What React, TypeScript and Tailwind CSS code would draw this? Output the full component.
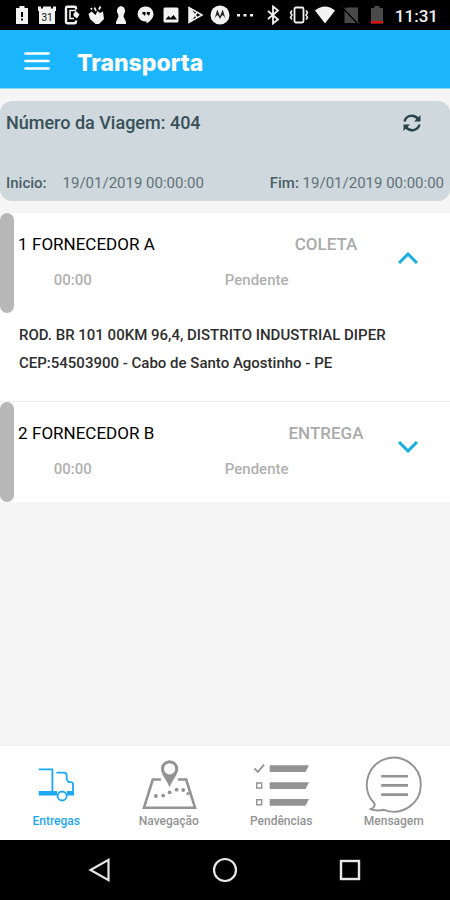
import { useState, type ReactNode } from 'react';

type Stop = {
  id: number;
  name: string;
  type: string;
  time: string;
  status: string;
  address: string[];
};

const stops: Stop[] = [
  {
    id: 1,
    name: 'FORNECEDOR A',
    type: 'COLETA',
    time: '00:00',
    status: 'Pendente',
    address: ['ROD. BR 101 00KM 96,4, DISTRITO INDUSTRIAL DIPER', 'CEP:54503900 - Cabo de Santo Agostinho - PE'],
  },
  {
    id: 2,
    name: 'FORNECEDOR B',
    type: 'ENTREGA',
    time: '00:00',
    status: 'Pendente',
    address: [],
  },
];

function StatusIcon({ children }: { children: ReactNode }) {
  return (
    <svg viewBox="0 0 20 20" className="h-5 w-5 shrink-0" fill="#f2f2f2" aria-hidden="true">
      {children}
    </svg>
  );
}

function StatusBar() {
  return (
    <div className="flex h-[30px] items-center bg-black pr-3 pl-3">
      <div className="flex w-[57%] justify-between">
        {/* low battery */}
        <StatusIcon>
          <path d="M7.500 1h5v2H16v16H4V3h3.500z" />
          <path d="M9 7h2v5H9zM9 13.500h2v2H9z" fill="#000" />
        </StatusIcon>
        {/* calendar */}
        <StatusIcon>
          <path d="M1 1.500h3v2h2v-2h8v2h2v-2h3V6h-1v13H2V6H1z" />
          <text x="10" y="15.500" fontSize="10" textAnchor="middle" fill="#111" className="font-['Roboto']">
            31
          </text>
        </StatusIcon>
        {/* phone with arrow */}
        <StatusIcon>
          <path
            d="M14 4.500V3q0-1.200-1.200-1.200H5.200Q4 1.800 4 3v14q0 1.200 1.200 1.200h7.600Q14 18.200 14 17v-1.500"
            fill="none"
            stroke="#f2f2f2"
            strokeWidth="2.400"
          />
          <path d="M14 5.500H8v8h4" fill="none" stroke="#f2f2f2" strokeWidth="1.600" />
          <path d="M11.500 8.500L14 6l3.500 3.500-2.500 4-3.500-2.500z" />
        </StatusIcon>
        {/* clapping hand */}
        <StatusIcon>
          <path d="M2.500 9l3-2.500 4 3.500 2-4 2.500 2 3-1.500 1 7.500-5 5H9.500L4 14z" />
          <path d="M6 4.500L5 3M10 6L8.500 2.500M13 4.500l1.500-3" stroke="#f2f2f2" strokeWidth="1.800" />
        </StatusIcon>
        {/* keyhole */}
        <StatusIcon>
          <path d="M10 1a5 5 0 0 1 3 8l-.5 2.500L15 17v2H5v-2l2.500-5.500L7 9a5 5 0 0 1 3-8z" />
        </StatusIcon>
        {/* hangouts */}
        <StatusIcon>
          <path d="M10 1.500a7.500 7.500 0 0 1 7.500 7.500c0 4-3.500 7.500-7 9.500v-2.200A7.500 7.500 0 1 1 10 1.500z" />
          <path d="M6.500 7h3v2.500L8 11V9.500H6.500zM10.800 7h3v2.500L12.300 11V9.500h-1.500z" fill="#000" />
        </StatusIcon>
        {/* picture */}
        <StatusIcon>
          <rect x="2.500" y="2.500" width="15" height="15" rx="1.500" />
          <path d="M4.500 14.500l3-3.500 2 2 3-3 3.500 4.500z" fill="#000" />
        </StatusIcon>
        {/* play store */}
        <StatusIcon>
          <path d="M4 2.500v15L17 10zM4 2.500L12.500 13M4 17.500L12.500 7" fill="none" stroke="#f2f2f2" strokeWidth="1.500" />
          <path d="M4 3v14l6-7z" />
        </StatusIcon>
        {/* motorola */}
        <StatusIcon>
          <circle cx="10" cy="10" r="9.500" />
          <path
            d="M7.300 4.500l2.200 5.500.5 1.500.5-1.500 2.200-5.500 2.800 9.500q-1.200-3-2.800-4-1.700 1.500-2.700 4-1-2.500-2.700-4-1.600 1-2.800 4z"
            fill="#222"
          />
        </StatusIcon>
        <StatusIcon>
          <path d="M2 9h3v2.500H2zM8.500 9h3v2.500h-3zM15 9h3v2.500h-3z" />
        </StatusIcon>
      </div>
      <div className="ml-2 flex gap-1.5">
        {/* bluetooth */}
        <StatusIcon>
          <path d="M5 6l10 8.500-5 4V1.500l5 4L5 14" fill="none" stroke="#f2f2f2" strokeWidth="1.800" />
        </StatusIcon>
        {/* vibrate */}
        <StatusIcon>
          <rect x="5.500" y="2.500" width="9" height="15" rx="1.500" fill="none" stroke="#f2f2f2" strokeWidth="1.800" />
          <path
            d="M3 5.500L1.500 7.500 3 10l-1.500 2.500L3 14.500M17 5.500l1.500 2L17 10l1.500 2.500-1.500 2"
            fill="none"
            stroke="#f2f2f2"
            strokeWidth="1.500"
          />
        </StatusIcon>
        {/* wifi */}
        <StatusIcon>
          <path d="M0 5.500Q10-2.500 20 5.500L10 18.500z" />
        </StatusIcon>
        {/* no sim */}
        <StatusIcon>
          <path d="M6 2.500h11V18H3.500V5z" fill="#484848" />
          <path d="M2 3l15.500 16" stroke="#000" strokeWidth="1.800" />
          <path d="M3 2.500l15 16" stroke="#555" strokeWidth="1" />
        </StatusIcon>
        {/* empty battery */}
        <StatusIcon>
          <path d="M7.500 1h5v2H16v15.500H4V3h3.500z" fill="#4a4a4a" />
          <path d="M4 16h12v2.500H4z" fill="#e01010" />
        </StatusIcon>
      </div>
      <span className="ml-auto pt-0.5 text-[17px] leading-5 font-medium text-[#f2f2f2]">11:31</span>
    </div>
  );
}

function StopCard({ stop, open, onToggle }: { stop: Stop; open: boolean; onToggle: () => void }) {
  return (
    <li className="bg-white">
      <div className="flex h-[100px]">
        <span className="w-3.5 shrink-0 rounded-[7px] bg-[#b8b8b8]" />
        <div className="min-w-0 flex-1 pt-[19px]">
          <div className="flex items-baseline text-[17px] leading-6">
            <span className="w-[18px] pl-1 text-black">{stop.id}</span>
            <h2 className="flex-1 text-black">{stop.name}</h2>
            <span className="w-20 text-center font-medium text-[#aaaaaa]">{stop.type}</span>
          </div>
          <div className="mt-3 grid grid-cols-[1fr_2fr] text-center text-[15px] leading-6 font-medium text-[#b0b0b0]">
            <span>{stop.time}</span>
            <span className="pl-4">{stop.status}</span>
          </div>
        </div>
        <button
          type="button"
          onClick={onToggle}
          aria-expanded={open}
          aria-label={`Detalhes de ${stop.name}`}
          className="grid w-[84px] place-items-center pb-2.5"
        >
          <svg viewBox="0 0 20 12" className="h-3 w-5" fill="none" stroke="#18aee0" strokeWidth="3">
            {open ? <path d="M1 11l9-9 9 9" /> : <path d="M1 1l9 9 9-9" />}
          </svg>
        </button>
      </div>
      {open && stop.address.length > 0 && (
        <address className="pt-2 pb-6 pl-[19px] text-[15px] leading-7 font-medium text-[#2e2e2e] not-italic">
          {stop.address.map((line) => (
            <p key={line}>{line}</p>
          ))}
        </address>
      )}
    </li>
  );
}

function TruckIcon() {
  return (
    <svg viewBox="0 0 56 56" className="h-14 w-14" fill="none" stroke="currentColor" strokeWidth="1.800">
      <path d="M10.700 12.300h13.700V35" />
      <path d="M28.400 15.700h7.600q2.700 0 2.700 2.700v3.900l1.800 2.900h2.500q2 0 2 2V35" />
      <path d="M10.700 36.200H29M39 36.200h7" strokeWidth="4.400" />
      <circle cx="34.100" cy="39" r="4.500" />
    </svg>
  );
}

function MapIcon() {
  return (
    <svg viewBox="0 0 56 56" className="h-14 w-14" fill="none" stroke="currentColor" strokeWidth="2.600">
      <path d="M19.900 22.500h-8.100L3 50.700h51L45.200 22.500h-8.300" />
      <path
        d="M28.600 3.200a8.600 8.600 0 0 1 8.600 8.600c0 5.500-5 10-8.600 18.500-3.600-8.500-8.600-13-8.600-18.500a8.600 8.600 0 0 1 8.600-8.600zm0 3a5.600 5.600 0 1 0 0 11.200 5.600 5.600 0 0 0 0-11.200z"
        fill="currentColor"
        fillRule="evenodd"
        stroke="none"
      />
      <g fill="currentColor" stroke="none">
        <circle cx="14.900" cy="39" r="1.900" />
        <circle cx="22.200" cy="38.600" r="1.900" />
        <circle cx="28.600" cy="35.300" r="1.900" />
        <circle cx="35.600" cy="32.700" r="1.900" />
        <circle cx="42.200" cy="33" r="1.900" />
        <circle cx="47" cy="36.500" r="1.500" />
      </g>
    </svg>
  );
}

function ListIcon() {
  return (
    <svg viewBox="0 0 56 56" className="h-14 w-14" fill="currentColor">
      <path d="M1.400 11.500l3.500 3.500L11 7.700" fill="none" stroke="currentColor" strokeWidth="1.800" />
      <path d="M16.700 8.300H56L52.500 15H16.700zM16.700 25.300H56L52.500 32H16.700zM16.700 42H56l-3.500 6.700H16.700z" />
      <path d="M3.700 26h5v5h-5zM3.700 42.800h5v5h-5z" fill="none" stroke="currentColor" strokeWidth="1.400" />
    </svg>
  );
}

function MessageIcon() {
  return (
    <svg viewBox="0 0 56 56" className="h-14 w-14 overflow-visible" fill="none" stroke="currentColor" strokeWidth="1.900">
      <path
        d="M8.500 46.500A27 27 0 1 1 18 52.800Q11 54.300 4.200 52.200 9.500 50.500 8.500 46.500z"
        strokeLinejoin="round"
      />
      <path d="M15.200 19.200H42M15.200 28.400H42M15.200 37.600H42" strokeWidth="2.600" />
    </svg>
  );
}

const tabs = [
  { label: 'Entregas', icon: <TruckIcon /> },
  { label: 'Navegação', icon: <MapIcon /> },
  { label: 'Pendências', icon: <ListIcon /> },
  { label: 'Mensagem', icon: <MessageIcon /> },
];

export default function App() {
  const [openId, setOpenId] = useState<number | null>(1);
  const [tab, setTab] = useState('Entregas');

  return (
    <div className="flex min-h-screen flex-col bg-[#f5f5f5] font-['Roboto','Liberation_Sans',sans-serif]">
      <StatusBar />

      <header className="flex h-[59px] items-center border-b border-[#8fdcff] bg-[#1cb5ff] pt-1 pl-6 text-white">
        <button type="button" aria-label="Menu">
          <svg viewBox="0 0 26 20" className="h-5 w-[26px]" stroke="currentColor" strokeWidth="2.600" strokeLinecap="round">
            <path d="M1.500 2.500h23M1.500 10h23M1.500 17.500h23" />
          </svg>
        </button>
        <h1 className="ml-[27px] pt-1 font-['Inter',sans-serif] text-[23px] leading-7 font-extrabold">Transporta</h1>
      </header>

      <main className="flex-1 pt-3">
        {/* trip summary */}
        <section className="rounded-xl bg-[#cfd8dc] px-1.5 pb-2">
          <div className="flex items-center justify-between pt-2.5 pr-[22px]">
            <h2 className="text-[18px] leading-6 font-medium text-[#37505a]">Número da Viagem: 404</h2>
            <button type="button" aria-label="Atualizar">
              <svg viewBox="0 0 20 20" className="h-5 w-5" fill="none" stroke="#26424b" strokeWidth="2.400">
                <path d="M2.500 8.500C4 2.500 12 .5 16 6M17.500 11.500C16 17.500 8 19.500 4 14" />
                <path d="M18.500 2v6.500H12zM1.500 18v-6.500H8z" fill="#26424b" stroke="none" />
              </svg>
            </button>
          </div>
          <div className="mt-[38px] flex justify-between text-[15px] leading-5 text-[#5f7278]">
            <p>
              <b className="mr-4 font-medium text-[#4a6069]">Inicio:</b>
              19/01/2019 00:00:00
            </p>
            <p>
              <b className="font-medium text-[#4a6069]">Fim:</b> 19/01/2019 00:00:00
            </p>
          </div>
        </section>

        <ul className="mt-3 divide-y divide-[#ececec]">
          {stops.map((stop) => (
            <StopCard
              key={stop.id}
              stop={stop}
              open={openId === stop.id}
              onToggle={() => setOpenId(openId === stop.id ? null : stop.id)}
            />
          ))}
        </ul>
      </main>

      <nav className="grid grid-cols-4 border-t border-[#eeeeee] bg-white pt-[11px] pb-2.5">
        {tabs.map((t) => (
          <button
            key={t.label}
            type="button"
            onClick={() => setTab(t.label)}
            className={`flex flex-col items-center text-xs leading-[17px] font-medium ${
              tab === t.label ? 'text-[#1ba8f5]' : 'text-[#939393]'
            }`}
          >
            {t.icon}
            {t.label}
          </button>
        ))}
      </nav>

      {/* system buttons */}
      <div className="grid h-[60px] grid-cols-3 bg-black px-[38px] text-[#e8e8e8]">
        <button type="button" aria-label="Voltar" className="grid place-items-center">
          <svg viewBox="0 0 26 26" className="h-[26px] w-[26px]" fill="none" stroke="currentColor" strokeWidth="2.200">
            <path d="M21.500 2.800v20.400L3.500 13z" />
          </svg>
        </button>
        <button type="button" aria-label="Início" className="grid place-items-center">
          <svg viewBox="0 0 26 26" className="h-[26px] w-[26px]" fill="none" stroke="currentColor" strokeWidth="2.200">
            <circle cx="13" cy="13" r="11" />
          </svg>
        </button>
        <button type="button" aria-label="Recentes" className="grid place-items-center">
          <svg viewBox="0 0 26 26" className="h-[26px] w-[26px]" fill="none" stroke="currentColor" strokeWidth="2.400">
            <rect x="4" y="4" width="18" height="18" />
          </svg>
        </button>
      </div>
    </div>
  );
}
